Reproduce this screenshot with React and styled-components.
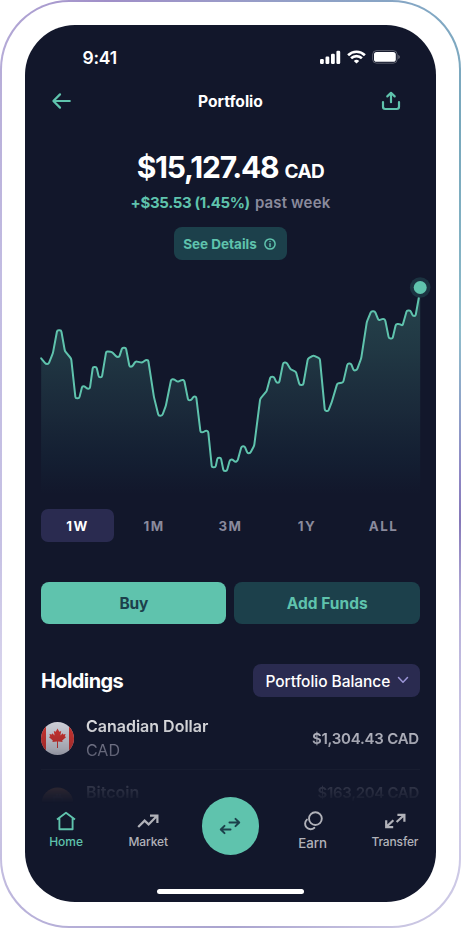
import React from 'react';
import styled, { createGlobalStyle } from 'styled-components';

const c = {
  bg: '#12172b',
  mint: '#5fc3ad',
  teal: '#1c404b',
  indigo: '#2a2b50',
  grey: '#8a8a9c',
  nav: '#b1b2b9',
};

const Global = createGlobalStyle`
  * { box-sizing: border-box; }
  body { margin: 0; background: #fff; font-family: Inter, sans-serif; }
  button { font: inherit; border: 0; padding: 0; margin: 0; background: none; color: inherit; }
  svg { display: block; flex: none; }
`;

const Frame = styled.div`
  width: 461px;
  height: 928px;
  padding: 1.7px;
  border-radius: 69px;
  background: conic-gradient(#9a9bc8 0deg, #82a8c4 24deg, #78a8bc 34deg, #8fbccb 60deg, #8f88c4 92deg, #8578b8 104deg,
    #b5aed8 122deg, #d0cce8 145deg, #c9c5e2 160deg, #aaa4cf 180deg, #b9b2da 205deg, #dcd8ee 220deg, #c6c1e4 250deg,
    #c2bce2 310deg, #b9b0da 328deg, #a08fc8 345deg, #9a9bc8 360deg);
`;

const Shell = styled.div`
  height: 100%;
  padding: 23.3px;
  border-radius: 67.3px;
  background: #fff;
`;

const Screen = styled.main`
  width: 411px;
  height: 877px;
  border-radius: 50px;
  background: ${c.bg};
  color: #fff;
  overflow: hidden;
  display: flex;
  flex-direction: column;
`;

const T = styled.span`
  white-space: nowrap;
  font-size: ${(p) => p.$size}px;
  font-weight: ${(p) => p.$weight || 600};
  letter-spacing: ${(p) => p.$track || 0}px;
  color: ${(p) => p.$color || 'inherit'};
  line-height: 1.2;
`;

const StatusBar = styled.div`
  height: 65px;
  padding: 0 36px 0 57.5px;
  display: flex;
  align-items: center;
  justify-content: space-between;
`;

const Header = styled.header`
  height: 22px;
  padding: 0 34px 0 26px;
  display: grid;
  grid-template-columns: 22px 1fr 22px;
  align-items: center;
  text-align: center;
  color: #fff;
`;

const Title = styled(T)`
  padding: 3px 0 0 8px;
`;

const Amount = styled.div`
  height: 36px;
  margin-top: 37px;
  display: flex;
  justify-content: center;
  align-items: baseline;
  gap: 6px;
`;

const Change = styled.div`
  height: 24px;
  margin-top: 6px;
  padding-top: 1px;
  display: flex;
  justify-content: center;
  align-items: center;
  gap: 5px;
`;

const DetailsButton = styled.button`
  align-self: center;
  width: 113px;
  height: 33.5px;
  margin-top: 12px;
  border-radius: 8px;
  background: ${c.teal};
  color: ${c.mint};
  display: flex;
  align-items: center;
  justify-content: center;
  gap: 7px;
  padding: 1px 2px 0 0;
`;

const Tabs = styled.div`
  margin: 14px 16px 0;
  height: 33px;
  display: grid;
  grid-template-columns: repeat(5, 73px);
  gap: 3.5px;
`;

const Tab = styled.button`
  border-radius: 7px;
  background: ${(p) => (p.$active ? c.indigo : 'transparent')};
  color: ${(p) => (p.$active ? '#fff' : c.grey)};
`;

const Actions = styled.div`
  margin: 40.5px 16px 0;
  height: 41.5px;
  display: grid;
  grid-template-columns: 1fr 1fr;
  gap: 8px;
`;

const Action = styled.button`
  border-radius: 8px;
  background: ${(p) => (p.$primary ? c.mint : c.teal)};
  color: ${(p) => (p.$primary ? c.teal : c.mint)};
`;

const HoldingsBar = styled.div`
  margin: 40px 16px 0;
  height: 33px;
  display: flex;
  align-items: center;
  justify-content: space-between;
`;

const SectionTitle = styled(T)`
  padding-top: 2px;
`;

const Select = styled.button`
  width: 167px;
  height: 33px;
  border-radius: 8px;
  background: ${c.indigo};
  display: flex;
  align-items: center;
  justify-content: space-between;
  padding: 0 11px 0 12.5px;

  span { padding-top: 3px; }
`;

const List = styled.div`
  height: 106.5px;
  padding: 0 16px;
  overflow: hidden;
  mask-image: linear-gradient(#000 0%, rgba(0, 0, 0, 0.85) 22%, rgba(0, 0, 0, 0.65) 48%, rgba(0, 0, 0, 0.18) 84%, transparent 100%);
`;

const Row = styled.div`
  height: ${(p) => (p.$last ? 32 : 73.5)}px;
  padding-top: ${(p) => (p.$last ? 12.5 : 10)}px;
  border-bottom: ${(p) => (p.$last ? 0 : 1)}px solid #212639;
  display: flex;
  align-items: ${(p) => (p.$last ? 'flex-start' : 'center')};
  gap: 12px;
`;

const Names = styled.div`
  flex: 1;
  display: flex;
  flex-direction: column;
  gap: 5px;
`;

const Value = styled(T)`
  margin-right: 1px;
  padding-top: 1px;
`;

const CoinSlot = styled.div`
  margin-top: 4px;
  opacity: 0.75;
`;

const Nav = styled.nav`
  height: 57px;
  margin-top: -6px;
  display: grid;
  grid-template-columns: repeat(5, 1fr);
`;

const NavItem = styled.button`
  color: ${(p) => (p.$active ? c.mint : c.nav)};
  display: flex;
  flex-direction: column;
  align-items: center;
  justify-content: flex-start;
  padding-top: 14px;
  gap: ${(p) => p.$gap || 4}px;
`;

const Fab = styled.button`
  width: 57.5px;
  height: 57.5px;
  border-radius: 50%;
  background: ${c.mint};
  justify-self: center;
  display: grid;
  place-items: center;
`;

const HomeBar = styled.div`
  width: 147px;
  height: 5.5px;
  border-radius: 3px;
  background: #fff;
  margin: 34.2px auto 0;
`;

const Icons = styled.div`
  display: flex;
  align-items: center;
  gap: 6px;
`;

/* Price series, in thirds of a pixel from the left and top of the plot. */
const series = [
  [48, 295], [62, 312], [70, 312], [83, 280], [96, 211], [108, 211], [119, 273], [138, 296], [151, 415], [162, 415],
  [171, 379], [178, 379], [186, 386], [194, 386], [203, 321], [214, 321], [221, 352], [230, 352], [243, 274], [260, 276],
  [275, 291], [282, 291], [291, 263], [302, 263], [313, 320], [321, 320], [331, 304], [351, 308], [361, 300], [369, 300],
  [386, 410], [400, 467], [411, 467], [422, 437], [438, 358], [446, 357], [457, 366], [471, 359], [477, 361], [489, 421],
  [498, 421], [505, 409], [513, 410], [526, 517], [534, 517], [542, 511], [549, 514], [560, 622], [571, 622], [577, 593],
  [587, 593], [595, 633], [605, 633], [614, 600], [621, 598], [630, 606], [637, 603], [649, 559], [658, 558], [667, 580],
  [675, 579], [687, 557], [705, 416], [724, 394], [736, 350], [746, 350], [754, 368], [762, 368], [774, 308], [784, 307],
  [796, 328], [812, 335], [823, 375], [834, 375], [848, 296], [865, 286], [884, 296], [899, 452], [909, 454], [920, 425],
  [936, 371], [954, 367], [967, 311], [977, 310], [986, 332], [995, 330], [1008, 295], [1025, 185], [1038, 154],
  [1049, 154], [1060, 181], [1075, 176], [1080, 180], [1091, 235], [1102, 236], [1112, 193], [1121, 191], [1132, 197],
  [1145, 151], [1156, 152], [1163, 168], [1171, 168], [1185, 90],
].map(([x, y]) => [x / 3 + 0.2, y / 3]);

function smooth(pts) {
  const toward = (a, b) => {
    const len = Math.hypot(b[0] - a[0], b[1] - a[1]);
    const k = Math.min(1.5, len / 2) / len;
    return `${(a[0] + (b[0] - a[0]) * k).toFixed(2)} ${(a[1] + (b[1] - a[1]) * k).toFixed(2)}`;
  };
  let d = `M${pts[0].join(' ')}`;
  for (let i = 1; i < pts.length - 1; i++) {
    d += `L${toward(pts[i], pts[i - 1])}Q${pts[i].join(' ')} ${toward(pts[i], pts[i + 1])}`;
  }
  return `${d}L${pts[pts.length - 1].join(' ')}`;
}

function Chart() {
  const line = smooth(series);
  return (
    <svg width="411" height="234.5" viewBox="0 0 411 234.5">
      <defs>
        <linearGradient id="area" gradientUnits="userSpaceOnUse" x1="0" y1="28" x2="0" y2="234">
          <stop offset="0" stopColor={c.mint} stopOpacity="0.26" />
          <stop offset="0.3" stopColor={c.mint} stopOpacity="0.19" />
          <stop offset="0.6" stopColor="#4d9a94" stopOpacity="0.14" />
          <stop offset="0.85" stopColor="#1d5060" stopOpacity="0.12" />
          <stop offset="1" stopColor="#1d5060" stopOpacity="0" />
        </linearGradient>
      </defs>
      <path d={`${line}V234.5H16Z`} fill="url(#area)" />
      <path d={line} fill="none" stroke={c.mint} strokeWidth="2" strokeLinecap="round" strokeLinejoin="round" />
      <circle cx="395.2" cy="27.5" r="10.3" fill="#1b3341" />
      <circle cx="395.2" cy="27.5" r="6.5" fill={c.mint} />
    </svg>
  );
}

const Stroke = ({ w, h, sw = 2, color = 'currentColor', cap = 'round', children }) => (
  <svg
    width={w}
    height={h}
    viewBox={`0 0 ${w} ${h}`}
    fill="none"
    stroke={color}
    strokeWidth={sw}
    strokeLinecap={cap}
    strokeLinejoin={cap === 'round' ? 'round' : 'miter'}
  >
    {children}
  </svg>
);

const StatusIcons = () => (
  <Icons>
    <svg width="21" height="14" viewBox="0 0 21 14" fill="#fff">
      <rect x="0" y="9" width="3.8" height="5" rx="1.2" />
      <rect x="5.5" y="6.6" width="3.8" height="7.4" rx="1.2" />
      <rect x="11" y="3.8" width="3.8" height="10.2" rx="1.2" />
      <rect x="16.4" y="0.8" width="3.8" height="13.2" rx="1.2" />
    </svg>
    <svg width="19" height="14" viewBox="0 0 19 14" fill="none" stroke="#fff" strokeWidth="2.6">
      <path d="M1.1 5.2A12 12 0 0 1 17.9 5.2" />
      <path d="M4.1 8.3A7.8 7.8 0 0 1 14.9 8.3" />
      <path d="M9.5 13.6L6.8 10.9A4 4 0 0 1 12.2 10.9Z" fill="#fff" stroke="none" />
    </svg>
    <svg width="28" height="14" viewBox="0 0 28 14">
      <rect x="0.6" y="0.6" width="24.6" height="12.6" rx="4" fill="none" stroke="#fff" strokeOpacity="0.3" />
      <rect x="2" y="2" width="21.8" height="9.8" rx="2.6" fill="#fff" />
      <path d="M26.3 4.7Q27.8 5.4 27.8 6.9T26.3 9.1Z" fill="#fff" fillOpacity="0.4" />
    </svg>
  </Icons>
);

const Flag = () => (
  <svg width="33" height="33" viewBox="0 0 33 33">
    <clipPath id="disc"><circle cx="16.5" cy="16.5" r="16.5" /></clipPath>
    <g clipPath="url(#disc)">
      <rect width="33" height="33" fill="#f2f2f8" />
      <rect width="5" height="33" fill="#f0382e" />
      <rect x="28" width="5" height="33" fill="#f0382e" />
      <path
        d="M16.5 6.4L18.3 9.8L20.2 8.9L19.4 13.4L21.7 11.2L22.2 12.5L24.6 12L23.8 14.4L25.2 15.1L21.2 18.4L21.6 20L17 19.4V26H16V19.4L11.4 20L11.8 18.4L7.8 15.1L9.2 14.4L8.4 12L10.8 12.5L11.3 11.2L13.6 13.4L12.8 8.9L14.7 9.8Z"
        fill="#f0382e"
      />
    </g>
  </svg>
);

const Coin = () => (
  <svg width="33" height="16" viewBox="0 0 33 16">
    <circle cx="16.5" cy="16.5" r="16" fill="#e2935a" />
    <path d="M13 9V24M16 7V10M19 7V10M13 10H18.5A3 3 0 0 1 18.5 16H13" fill="none" stroke="#f0b48c" strokeWidth="1.6" />
  </svg>
);

export default function App() {
  return (
    <Frame>
      <Global />
      <Shell>
        <Screen>
          <StatusBar>
            <T $size={17.5} $weight={600} $track={-0.2}>9:41</T>
            <StatusIcons />
          </StatusBar>
          <Header>
            <Stroke w={22} h={18} color={c.mint} sw={2.2}><path d="M18.8 9H2.5M9 2.4L2.4 9L9 15.6" /></Stroke>
            <Title $size={15.6} $weight={700} $track={0}>Portfolio</Title>
            <Stroke w={22} h={20} color={c.mint} sw={2.2}><path d="M3 11V15.8Q3 18 5.2 18H16.8Q19 18 19 15.8V11M11 11.2V2.2M7.3 5.4L11 1.8L14.7 5.4" /></Stroke>
          </Header>
          <Amount>
            <T $size={30} $weight={700} $track={-1.2}>$15,127.48</T>
            <T $size={19} $weight={700} $track={-0.5}>CAD</T>
          </Amount>
          <Change>
            <T $size={15} $weight={700} $color={c.mint} $track={-0.34}>+$35.53 (1.45%)</T>
            <T $size={15} $weight={600} $color={c.grey} $track={0.15}>past week</T>
          </Change>
          <DetailsButton>
            <T $size={13.5} $weight={700}>See Details</T>
            <Stroke w={12} h={12} sw={1.5}><circle cx="6" cy="6" r="5.1" /><path d="M6 5.7V8.5M6 3.4V3.5" /></Stroke>
          </DetailsButton>
          <Chart />
          <Tabs>
            {['1W', '1M', '3M', '1Y', 'ALL'].map((t, i) => (
              <Tab key={t} $active={i === 0}><T $size={13.3} $weight={700} $track={1.5}>{t}</T></Tab>
            ))}
          </Tabs>
          <Actions>
            <Action $primary><T $size={15.5} $weight={700} $track={-0.2}>Buy</T></Action>
            <Action><T $size={15.5} $weight={700}>Add Funds</T></Action>
          </Actions>
          <HoldingsBar>
            <SectionTitle $size={20} $weight={700} $track={-0.6}>Holdings</SectionTitle>
            <Select>
              <T $size={15.5} $weight={500} $track={-0.04}>Portfolio Balance</T>
              <Stroke w={12} h={8} sw={1.5} color="#9c96d8"><path d="M1.5 1.5L6 6.2L10.5 1.5" /></Stroke>
            </Select>
          </HoldingsBar>
          <List>
            <Row>
              <Flag />
              <Names>
                <T $size={16} $weight={600}>Canadian Dollar</T>
                <T $size={16} $weight={400} $color="#9a9aac">CAD</T>
              </Names>
              <Value $size={15} $weight={600} $color="#e4e4ec" $track={-0.22}>$1,304.43 CAD</Value>
            </Row>
            <Row $last>
              <CoinSlot><Coin /></CoinSlot>
              <Names>
                <T $size={16} $weight={600} $color="#c4c4d0">Bitcoin</T>
              </Names>
              <Value $size={15} $weight={600} $color="#c4c4d0" $track={-0.3}>$163,204 CAD</Value>
            </Row>
          </List>
          <Nav>
            <NavItem $active>
              <Stroke w={20} h={20} sw={1.9} cap="butt"><path d="M1 8.4L10 1.8L19 8.4M3.4 7.2V18.2H16.6V7.2" strokeLinejoin="round" /></Stroke>
              <T $size={12} $weight={500} $track={0}>Home</T>
            </NavItem>
            <NavItem>
              <Stroke w={22} h={20} sw={2.2} cap="butt"><path d="M1.2 16L7.6 9.6L11.6 13.4L19.6 5.2M13 4.6H20.4V12" /></Stroke>
              <T $size={12} $weight={500} $track={-0.1}>Market</T>
            </NavItem>
            <Fab>
              <Stroke w={22} h={18} sw={2} color={c.teal}><path d="M10.5 5.5H20M16.5 1.9L20.2 5.5L16.5 9.1M11.5 12.5H2M5.5 8.9L1.8 12.5L5.5 16.1" /></Stroke>
            </Fab>
            <NavItem $gap={5}>
              <Stroke w={20} h={20} sw={1.9}><circle cx="12.4" cy="7.6" r="6.4" /><path d="M3.9 8.6A5.3 5.3 0 1 0 11.4 16.8" /></Stroke>
              <T $size={13.3} $weight={500}>Earn</T>
            </NavItem>
            <NavItem>
              <Stroke w={22} h={20} sw={2.2} cap="butt"><path d="M12.6 11L20 4.2M13.4 3.8H20.4V10.8M9.4 9.2L2.6 15.6M2.2 9.2V16.2H9.2" /></Stroke>
              <T $size={12} $weight={500} $track={-0.15}>Transfer</T>
            </NavItem>
          </Nav>
          <HomeBar />
        </Screen>
      </Shell>
    </Frame>
  );
}
